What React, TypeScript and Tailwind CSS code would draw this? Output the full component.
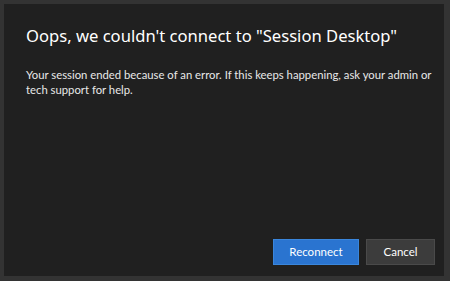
export default function App() {
  return (
    <div className="h-[281px] w-[450px] bg-[#333333] pl-[4px] pt-[4px] pr-[6px] pb-[5px] font-['Lato',sans-serif]">
      <div className="flex h-full flex-col bg-[#202020] pl-[22px] pr-[9px] pt-[21px] pb-[11px]">
        <h1 className="whitespace-nowrap font-['Noto_Sans',sans-serif] text-[16.6px] leading-[22px] text-white">
          Oops, we couldn't connect to "Session Desktop"
        </h1>
        <p className="mt-[20px] whitespace-nowrap text-[11.3px] leading-[15px] text-[#e8e8e8]">
          Your session ended because of an error. If this keeps happening, ask your admin or
          <br />
          tech support for help.
        </p>
        <div className="mt-auto flex justify-end gap-[7px]">
          <button className="h-[26px] w-[86px] border border-[#3a86dc] bg-[#2a74d0] text-[11.5px] text-white">
            Reconnect
          </button>
          <button className="h-[26px] w-[69px] border border-[#4a4a4a] bg-[#3c3c3c] text-[11.5px] text-white">
            Cancel
          </button>
        </div>
      </div>
    </div>
  );
}
